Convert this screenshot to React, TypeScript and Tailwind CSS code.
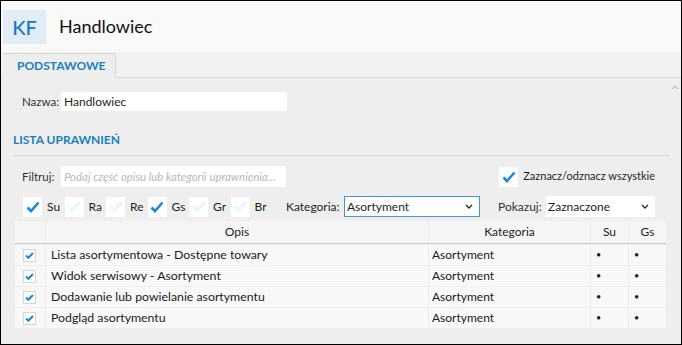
import React from 'react'

const rows = [
  'Lista asortymentowa - Dostępne towary',
  'Widok serwisowy - Asortyment',
  'Dodawanie lub powielanie asortymentu',
  'Podgląd asortymentu',
]

const flags = [
  { label: 'Su', on: true },
  { label: 'Ra', on: false },
  { label: 'Re', on: false },
  { label: 'Gs', on: true },
  { label: 'Gr', on: false },
  { label: 'Br', on: false },
]

function Check({ on }: { on: boolean }) {
  return (
    <span className="flex h-[20px] w-[19px] shrink-0 items-center justify-center bg-white">
      {on ? (
        <svg width="14" height="12" viewBox="0 0 14 12">
          <path d="M1.5 6.5 L5 10 L12.5 1.5" fill="none" stroke="#1b87d6" strokeWidth="2.6" />
        </svg>
      ) : (
        <svg width="14" height="12" viewBox="0 0 14 12">
          <path
            d="M1 6.5 L2.2 5.3 L5 8.1 L11.8 0.8 L13 2 L5 10.6 Z"
            fill="none"
            stroke="#cfe6f6"
            strokeWidth="0.9"
          />
        </svg>
      )}
    </span>
  )
}

function SmallCheck() {
  return (
    <span className="flex h-[13px] w-[13px] items-center justify-center border border-[#d6d6d6] bg-white">
      <svg width="9" height="7" viewBox="0 0 9 7">
        <path d="M1 3.6 L3.4 5.8 L8 1" fill="none" stroke="#1b87d6" strokeWidth="2" />
      </svg>
    </span>
  )
}

function Chevron() {
  return (
    <svg width="8" height="5" viewBox="0 0 8 5">
      <path d="M1 1 L4 4 L7 1" fill="none" stroke="#222" strokeWidth="1.3" />
    </svg>
  )
}

export default function App() {
  return (
    <div
      className="flex h-[345px] w-[682px] flex-col overflow-hidden whitespace-nowrap border border-black bg-[#eeeeee] text-[12px] text-[#1e1e1e]"
      style={{ fontFamily: 'Lato, "Noto Sans", sans-serif' }}
    >
      <div className="flex h-[51px] shrink-0 items-center bg-[#f9f9f9]">
        <div className="ml-[2px] flex h-[34px] w-[43px] items-center justify-center bg-[#e2ecf4] text-[20px] font-medium text-[#1a78c2]">
          KF
        </div>
        <div className="ml-[13px] text-[18px] text-[#111]">Handlowiec</div>
      </div>

      <div className="flex h-[26px] shrink-0 items-end border-b border-[#d9d9d9] bg-[#f2f2f2] pl-[2px]">
        <div className="-mb-px flex h-[25px] w-[113px] items-center border-t border-r border-[#d9d9d9] bg-[#eeeeee] pl-[14px] text-[12px] font-bold text-[#1a7fbf]">
          PODSTAWOWE
        </div>
      </div>

      <div className="relative flex-1 px-[12px]">
        <svg className="absolute right-[2px] top-[7px]" width="8" height="5" viewBox="0 0 8 5">
          <path d="M1 4 L4 1 L7 4" fill="none" stroke="#aaa" strokeWidth="1" />
        </svg>

        <div className="mt-[14px] flex items-center pl-[9px]">
          <span className="w-[39px] shrink-0 text-[11.5px] text-[#333]">Nazwa:</span>
          <div className="flex h-[19px] w-[226px] items-center bg-white pl-[3px]">Handlowiec</div>
        </div>

        <div className="mt-[20px] border-b border-[#d4d4d4] pb-[6px] text-[12px] font-bold text-[#1a7fbf]">
          LISTA UPRAWNIEŃ
        </div>

        <div className="mt-[10px] flex items-center pl-[9px]">
          <span className="w-[39px] shrink-0 text-[11.5px] text-[#333]">Filtruj:</span>
          <div className="flex h-[21px] w-[225px] items-center bg-white pl-[3px] text-[11.4px] italic text-[#b8b8b8]">
            Podaj część opisu lub kategorii uprawnienia...
          </div>
          <div className="ml-auto mr-[14px] flex items-center gap-[5px]">
            <Check on />
            <span className="text-[11px]">Zaznacz/odznacz wszystkie</span>
          </div>
        </div>

        <div className="mt-[9px] flex items-center pl-[10px]">
          <div className="flex w-[263px] shrink-0 items-center">
            {flags.map((f) => (
              <div key={f.label} className="flex w-[41.5px] shrink-0 items-center gap-[5px]">
                <Check on={f.on} />
                <span>{f.label}</span>
              </div>
            ))}
          </div>
          <span className="w-[53px] shrink-0">Kategoria:</span>
          <div className="ml-[5px] flex h-[21px] w-[136px] shrink-0 items-center justify-between border border-[#3c9ad9] bg-white pl-[2px] pr-[6px]">
            <span>Asortyment</span>
            <Chevron />
          </div>
          <span className="ml-[18px] w-[48px] shrink-0 text-[#333]">Pokazuj:</span>
          <div className="flex h-[21px] w-[109px] shrink-0 items-center justify-between bg-white pl-[2px] pr-[6px]">
            <span>Zaznaczone</span>
            <Chevron />
          </div>
        </div>

        <div className="mt-[4px] ml-[2px] w-[651px]">
          <div className="flex h-[23px] gap-[1px] border-b border-[#c8c8c8] text-[#222]">
            <div className="w-[30px] bg-[#f5f5f5]" />
            <div className="flex w-[382px] items-center justify-center bg-[#f5f5f5]">Opis</div>
            <div className="flex w-[161px] items-center justify-center bg-[#f5f5f5]">Kategoria</div>
            <div className="flex w-[37px] items-center justify-center bg-[#f5f5f5]">Su</div>
            <div className="flex w-[37px] items-center justify-center bg-[#f5f5f5]">Gs</div>
          </div>
          {rows.map((r) => (
            <div key={r} className="mt-[1px] flex h-[20px] gap-[1px] text-[#1a1a1a]">
              <div className="flex w-[30px] items-center bg-[#f8f8f8] pl-[8px]">
                <SmallCheck />
              </div>
              <div className="flex w-[382px] items-center bg-[#f8f8f8] pl-[5px] text-[12.3px]">{r}</div>
              <div className="flex w-[161px] items-center bg-[#f8f8f8] pl-[3px]">Asortyment</div>
              <div className="flex w-[37px] items-center bg-[#f8f8f8] pl-[5px] text-[9px]">•</div>
              <div className="flex w-[37px] items-center bg-[#f8f8f8] pl-[5px] text-[9px]">•</div>
            </div>
          ))}
        </div>
      </div>
    </div>
  )
}
